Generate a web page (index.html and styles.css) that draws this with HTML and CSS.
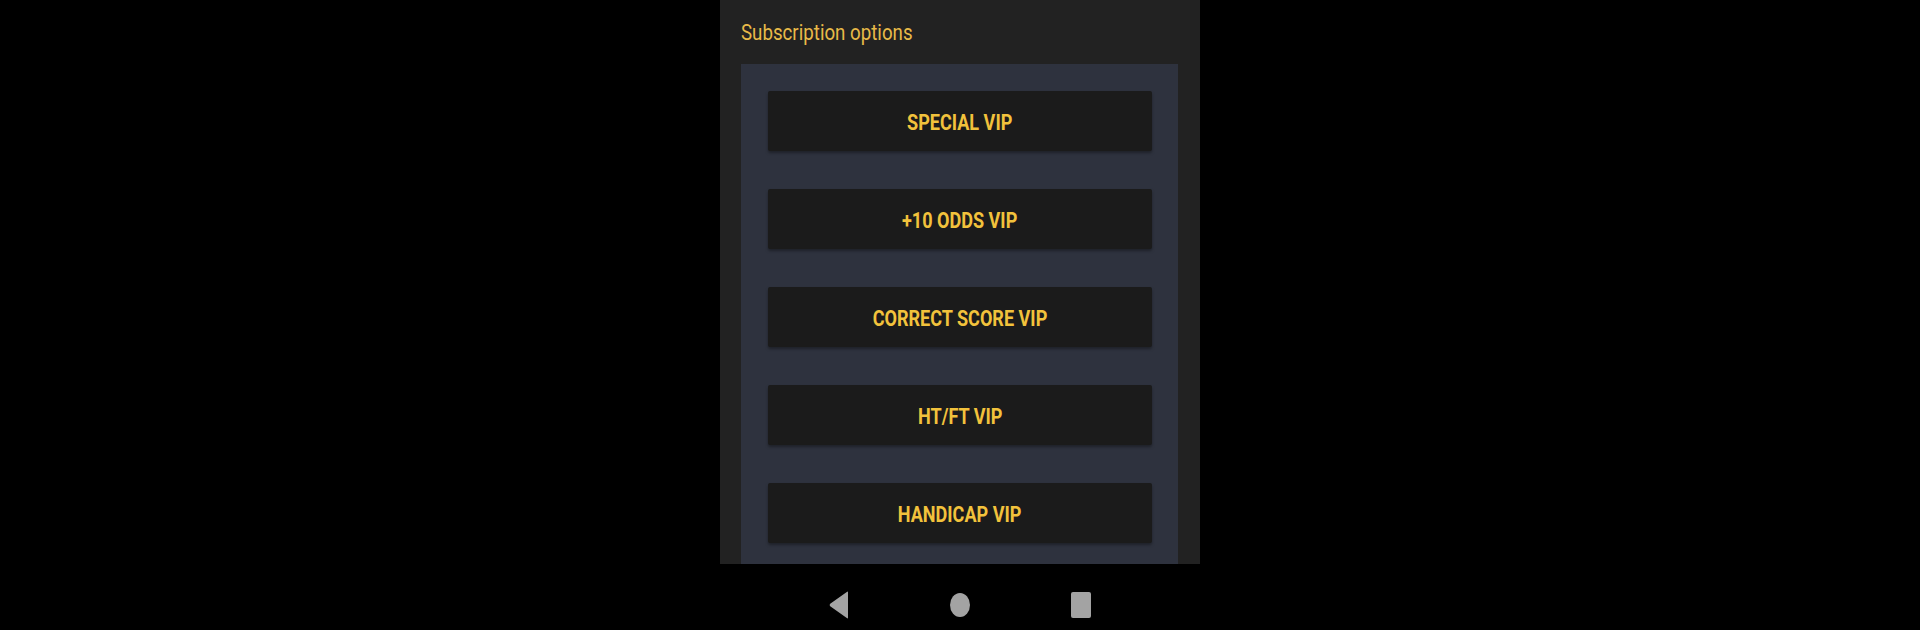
FILE: index.html
```html
<!DOCTYPE html>
<html>
<head>
<meta charset="utf-8">
<link rel="stylesheet" href="styles.css">
</head>
<body>
<div class="phone">
  <div class="screen">
    <div class="title"><span class="narrow">Subscription options</span></div>
    <div class="panel">
      <div class="btn"><span class="narrow">SPECIAL VIP</span></div>
      <div class="btn"><span class="narrow">+10 ODDS VIP</span></div>
      <div class="btn"><span class="narrow">CORRECT SCORE VIP</span></div>
      <div class="btn"><span class="narrow">HT/FT VIP</span></div>
      <div class="btn"><span class="narrow">HANDICAP VIP</span></div>
    </div>
  </div>
  <div class="navbar">
    <svg class="nav-icon" width="20" height="28" viewBox="0 0 20 28"><path d="M19 1.5 L19 26.5 Q19 28 17.8 27 L1.2 15.2 Q0 14 1.2 12.8 L17.8 1 Q19 0 19 1.5 Z" fill="#a3a3a3"/></svg>
    <svg class="nav-icon" width="20" height="24" viewBox="0 0 20 24"><ellipse cx="10" cy="12" rx="10" ry="12" fill="#a3a3a3"/></svg>
    <svg class="nav-icon" width="20" height="26" viewBox="0 0 20 26"><rect x="0" y="0" width="20" height="26" rx="2" fill="#a3a3a3"/></svg>
  </div>
</div>
</body>
</html>
```

FILE: styles.css
```css
html, body {
  margin: 0;
  padding: 0;
  background: #000;
  width: 1920px;
  height: 630px;
  overflow: hidden;
}

.phone {
  width: 480px;
  margin: 0 auto;
  display: flex;
  flex-direction: column;
}

.screen {
  height: 564px;
  background: #222222;
  padding: 0 22px 0 21px;
  box-sizing: border-box;
  overflow: hidden;
  display: flex;
  flex-direction: column;
}

.narrow {
  display: inline-block;
  white-space: nowrap;
}

.title {
  height: 64px;
  line-height: 64px;
  padding-top: 1px;
  box-sizing: border-box;
  font-family: Roboto, sans-serif;
  font-size: 21.5px;
  color: #e8ba48;
}

.title .narrow {
  transform: scaleX(0.87);
  transform-origin: left center;
}

.panel {
  flex: 1;
  background: #2e323e;
  padding: 27px 0 0 27px;
  display: flex;
  flex-direction: column;
  gap: 38px;
}

.btn {
  width: 384px;
  height: 60px;
  flex: none;
  background: #1b1b1b;
  border-radius: 2px;
  box-shadow: 0 2px 3px rgba(0, 0, 0, 0.35);
  display: flex;
  align-items: center;
  justify-content: center;
  padding-top: 2px;
  box-sizing: border-box;
  font-family: Roboto, sans-serif;
  font-weight: bold;
  font-size: 21.5px;
  color: #f2c23c;
}

.btn .narrow {
  transform: scaleX(0.84);
  transform-origin: center center;
}

.navbar {
  height: 66px;
  display: flex;
  align-items: center;
  justify-content: center;
  gap: 101px;
  padding-top: 16px;
  box-sizing: border-box;
}

.nav-icon {
  display: block;
}
```
